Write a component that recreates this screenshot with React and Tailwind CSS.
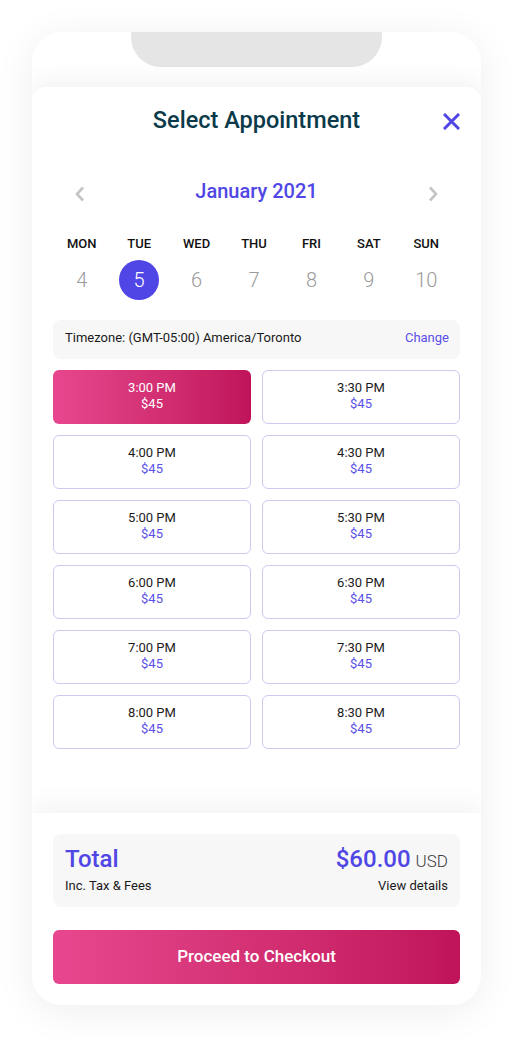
import React from "react";

const days = [
  ["MON", "4"],
  ["TUE", "5"],
  ["WED", "6"],
  ["THU", "7"],
  ["FRI", "8"],
  ["SAT", "9"],
  ["SUN", "10"],
];

const times = [
  "3:00 PM", "3:30 PM",
  "4:00 PM", "4:30 PM",
  "5:00 PM", "5:30 PM",
  "6:00 PM", "6:30 PM",
  "7:00 PM", "7:30 PM",
  "8:00 PM", "8:30 PM",
];

function Slot({ time, selected }) {
  if (selected) {
    return (
      <div className="h-[54px] rounded-[6px] bg-gradient-to-r from-[#e8478f] to-[#c0135a] flex flex-col items-center justify-center pb-[3px] text-[13px] leading-[16px] text-white">
        <span>{time}</span>
        <span>$45</span>
      </div>
    );
  }
  return (
    <div className="h-[54px] rounded-[6px] border-[1.5px] border-[#cdc9f0] bg-white flex flex-col items-center justify-center pb-[3px] text-[13px] leading-[16px]">
      <span className="text-[#1c1c1c]">{time}</span>
      <span className="text-[#5b4fe8]">$45</span>
    </div>
  );
}

export default function App() {
  return (
    <div className="w-[530px] h-[1055px] bg-white font-['Roboto','Noto_Sans',sans-serif] pt-[32px] pl-[32px]">
      <div className="w-[449px] h-[973px] rounded-[30px] bg-white shadow-[0_6px_40px_rgba(0,0,0,0.07)] overflow-hidden flex flex-col">
        <div className="mx-auto w-[251px] h-[35px] shrink-0 bg-[#e5e5e5] rounded-b-[30px]" />
        <div className="h-[20px] shrink-0" />
        <div className="flex-1 flex flex-col rounded-t-[14px] bg-white shadow-[0_-8px_22px_rgba(0,0,0,0.05)]">
          <div className="flex-1 flex flex-col px-[21px] pt-[19px]">
            <div className="grid grid-cols-[1fr_auto_1fr] items-center">
              <div />
              <h1 className="text-[23.5px] leading-[28px] font-medium text-[#0b3a4a]">
                Select Appointment
              </h1>
              <div className="flex justify-end pt-[3px]">
                <svg width="17" height="17" viewBox="0 0 17 17">
                  <path d="M2 2 L15 15 M15 2 L2 15" stroke="#5046e5" strokeWidth="3" strokeLinecap="square" fill="none" />
                </svg>
              </div>
            </div>

            <div className="mt-[43px] flex items-center justify-between px-[22px]">
              <svg width="10" height="16" viewBox="0 0 10 16" className="mt-[6px]">
                <polyline points="8,1.5 2,8 8,14.5" stroke="#c4c4c4" strokeWidth="2.6" fill="none" />
              </svg>
              <div className="text-[20px] leading-[28px] font-medium text-[#5046e5]">January 2021</div>
              <svg width="10" height="16" viewBox="0 0 10 16" className="mt-[6px]">
                <polyline points="2,1.5 8,8 2,14.5" stroke="#c4c4c4" strokeWidth="2.6" fill="none" />
              </svg>
            </div>

            <div className="mt-[31px] grid grid-cols-7 pr-[5px]">
              {days.map(([d]) => (
                <div key={d} className="text-center text-[13px] leading-[16px] font-medium text-[#111111]">
                  {d}
                </div>
              ))}
            </div>
            <div className="mt-[8px] grid grid-cols-7 pr-[5px]">
              {days.map(([d, n]) => (
                <div key={d} className="flex justify-center">
                  {n === "5" ? (
                    <div className="w-[40px] h-[40px] rounded-full bg-[#5046e5] flex items-center justify-center text-[20px] font-light text-white">
                      {n}
                    </div>
                  ) : (
                    <div className="h-[40px] flex items-center justify-center text-[20px] font-light text-[#9a9a9a]">
                      {n}
                    </div>
                  )}
                </div>
              ))}
            </div>

            <div className="mt-[20px] h-[39px] rounded-[8px] bg-[#f7f7f7] flex items-center justify-between pl-[12px] pr-[11px] pb-[3px] text-[13px]">
              <span className="text-[#1a1a1a]">Timezone: (GMT-05:00) America/Toronto</span>
              <span className="text-[#5b4fe8]">Change</span>
            </div>

            <div className="mt-[11px] grid grid-cols-2 gap-[11px]">
              {times.map((t, i) => (
                <Slot key={t} time={t} selected={i === 0} />
              ))}
            </div>
          </div>

          <div className="bg-white px-[21px] pt-[21px] pb-[21px] shadow-[0_-10px_22px_rgba(0,0,0,0.045)]">
            <div className="h-[73px] rounded-[8px] bg-[#f7f7f7] px-[12px] pt-[11px] flex justify-between">
              <div className="flex flex-col">
                <div className="h-[28px] text-[24px] leading-[28px] font-medium text-[#5046e5]">Total</div>
                <div className="mt-[5px] text-[13px] leading-[16px] text-[#1a1a1a]">Inc. Tax &amp; Fees</div>
              </div>
              <div className="flex flex-col items-end">
                <div className="h-[28px] leading-[28px] whitespace-nowrap">
                  <span className="text-[24px] font-medium text-[#5046e5]">$60.00</span>
                  <span className="ml-[5px] text-[17px] font-light text-[#3d3d3d]">USD</span>
                </div>
                <div className="mt-[5px] text-[13px] leading-[16px] text-[#1a1a1a]">View details</div>
              </div>
            </div>
            <button className="mt-[23px] w-full h-[54px] rounded-[6px] bg-gradient-to-r from-[#e8478f] to-[#c0135a] text-white text-[17px] font-medium flex items-center justify-center">
              Proceed to Checkout
            </button>
          </div>
        </div>
      </div>
    </div>
  );
}
